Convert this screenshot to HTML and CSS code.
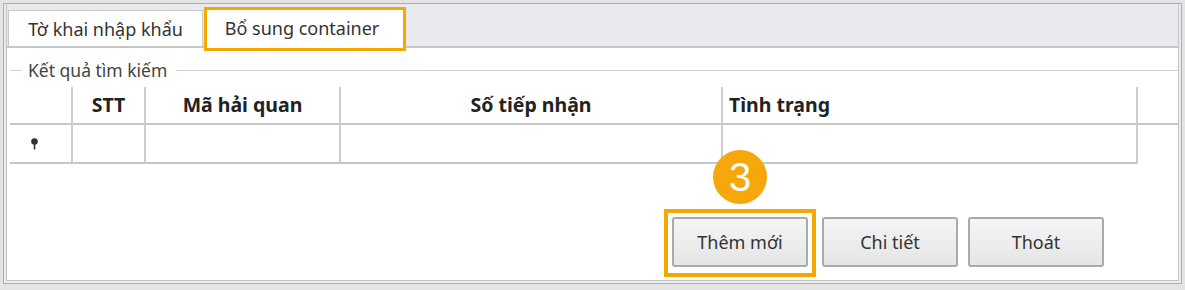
FILE: index.html
```html
<!DOCTYPE html>
<html lang="vi">
<head>
    <meta charset="UTF-8">
    <meta name="viewport" content="width=device-width, initial-scale=1.0">
    <title>Bổ sung container</title>
    <link rel="stylesheet" href="styles.css">
</head>
<body>
    <div class="window">
        <div class="inner">
            <div class="tabstrip">
                <div class="tab">Tờ khai nhập khẩu</div>
                <div class="tab active">Bổ sung container</div>
            </div>
            <div class="content">
                <div class="group-title">
                    <span class="line short"></span>
                    <span class="label">Kết quả tìm kiếm</span>
                    <span class="line"></span>
                </div>
                <div class="grid">
                    <div class="th"></div>
                    <div class="th center">STT</div>
                    <div class="th center">Mã hải quan</div>
                    <div class="th center">Số tiếp nhận</div>
                    <div class="th">Tình trạng</div>
                    <div class="th last"></div>

                    <div class="td indicator">
                        <svg width="9" height="12" viewBox="0 0 9 12">
                            <circle cx="4.5" cy="3.5" r="3.3" fill="#333"/>
                            <rect x="3.7" y="5" width="1.6" height="6.5" fill="#333"/>
                        </svg>
                    </div>
                    <div class="td"></div>
                    <div class="td"></div>
                    <div class="td"></div>
                    <div class="td"></div>
                    <div class="td empty"></div>
                </div>
                <div class="actions">
                    <div class="highlight">
                        <span class="step">3</span>
                        <button class="btn">Thêm mới</button>
                    </div>
                    <button class="btn">Chi tiết</button>
                    <button class="btn">Thoát</button>
                </div>
            </div>
        </div>
    </div>
</body>
</html>
```

FILE: styles.css
```css
* {
    box-sizing: border-box;
}
body {
    margin: 0;
    background-color: #e4e4e4;
    font-family: "Noto Sans", "DejaVu Sans", sans-serif;
    color: #333;
}
.window {
    margin: 3px 0 0 3px;
    width: 1179px;
    height: 281px;
    border: 1px solid #adadad;
    background-color: #ececec;
    padding: 0 2px 2px 2px;
}
.inner {
    height: 100%;
    border: 1px solid #c4c4c4;
    border-top: none;
    background-color: #fff;
}
.tabstrip {
    display: flex;
    align-items: flex-end;
    height: 44px;
    padding-left: 1px;
    background-color: #e9eaee;
    border-bottom: 2px solid #c6c6c6;
}
.tab {
    width: 195px;
    height: 36px;
    border: 1px solid #c9c9c9;
    border-bottom: none;
    background-color: #fff;
    font-size: 18px;
    line-height: 36px;
    text-align: center;
}
.tab.active {
    width: 196px;
    height: 38px;
    margin-left: 4px;
    margin-bottom: -2px;
    border: none;
    outline: 3px solid #f6a700;
    padding-right: 6px;
}
.content {
    padding: 12px 0 0 3px;
}
.group-title {
    display: flex;
    align-items: center;
    height: 20px;
}
.group-title .line {
    flex: 1;
    height: 1px;
    background-color: #d4d4d4;
}
.group-title .line.short {
    flex: 0 0 12px;
}
.group-title .label {
    padding: 0 9px 0 6px;
    font-size: 17.5px;
    color: #444;
}
.grid {
    display: grid;
    grid-template-columns: 63px 73px 195px 382px 415px 1fr;
    margin-top: 7px;
}
.th {
    height: 38px;
    border-right: 2px solid #cdcdcd;
    border-bottom: 2px solid #c6c6c6;
    padding-left: 6px;
    font-size: 19.5px;
    font-weight: bold;
    line-height: 36px;
    color: #222;
}
.th.center {
    text-align: center;
    padding-left: 0;
}
.th.last {
    border-right: none;
}
.td {
    height: 39px;
    border-right: 2px solid #cdcdcd;
    border-bottom: 2px solid #c6c6c6;
}
.td.empty {
    border: none;
}
.indicator {
    display: flex;
    align-items: center;
    padding-left: 20px;
}
.actions {
    display: flex;
    justify-content: flex-end;
    align-items: flex-start;
    margin-top: 45px;
    padding-right: 74px;
}
.highlight {
    position: relative;
    border: 4px solid #f6a700;
    padding: 4px 4px 6px 4px;
    margin-right: 6px;
}
.step {
    position: absolute;
    left: 50%;
    top: -63px;
    transform: translateX(-50%);
    width: 54px;
    height: 54px;
    border-radius: 50%;
    background-color: #f6a70c;
    color: #fff;
    font-family: "Liberation Sans", Arial, sans-serif;
    font-size: 40px;
    line-height: 54px;
    text-align: center;
}
.btn {
    width: 136px;
    height: 50px;
    border: 2px solid #aaa;
    border-radius: 3px;
    background: linear-gradient(#f5f5f5, #e5e5e5);
    font-family: "Noto Sans", "DejaVu Sans", sans-serif;
    font-size: 18px;
    color: #333;
    margin-top: 8px;
}
.highlight .btn {
    margin-top: 0;
}
.btn + .btn {
    margin-left: 10px;
}
```
